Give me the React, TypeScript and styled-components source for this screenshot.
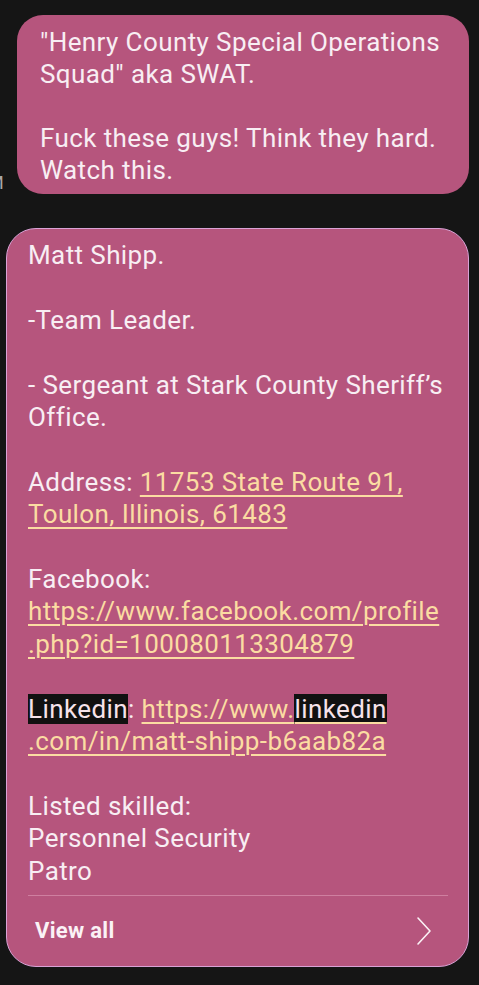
import * as React from "react";
import styled, { createGlobalStyle } from "styled-components";

const GlobalStyle = createGlobalStyle`
  html, body {
    margin: 0;
    padding: 0;
    background: #151515;
  }
  body {
    font-family: Roboto, "Noto Sans", "Liberation Sans", sans-serif;
  }
`;

const Page = styled.div`
  width: 479px;
  min-height: 985px;
  background: #151515;
  padding-top: 15px;
  box-sizing: border-box;
  overflow: hidden;
`;

const Row = styled.div`
  display: flex;
  align-items: flex-end;
`;

// timestamp, mostly scrolled off the left edge
const Time = styled.span`
  width: 17px;
  flex: none;
  font-size: 18px;
  line-height: 18px;
  color: #a8a8a8;
  padding-bottom: 2px;
  text-indent: -12px;
  overflow: hidden;
`;

const Bubble = styled.div<{ $bordered?: boolean }>`
  background: #b6557d;
  color: #f8eef3;
  font-size: 26px;
  letter-spacing: 0.4px;
  line-height: 32.4px;
  white-space: nowrap;
  box-sizing: border-box;
  border-radius: ${p => (p.$bordered ? "30px" : "26px")};
  border: ${p => (p.$bordered ? "1.5px solid #d9a2d6" : "none")};
`;

const SentBubble = styled(Bubble)`
  width: 452px;
  padding: 11px 20px 8px 23px;
  line-height: 32px;
`;

const CardWrap = styled.div`
  padding: 34px 10px 0 6px;
`;

const Card = styled(Bubble)`
  padding: 10px 20px 0 21px;
`;

// one visual line of message text; $gap adds a blank line before it
const Line = styled.div<{ $gap?: boolean }>`
  margin-top: ${p => (p.$gap ? "1lh" : "0")};
`;

const Link = styled.span`
  color: #fbdca2;
  text-decoration: underline;
  text-decoration-thickness: 1.5px;
  text-underline-offset: 4px;
`;

const Mark = styled.span`
  background: #111;
  color: #f6e3ea;
`;

const Divider = styled.div`
  height: 1px;
  background: rgba(255, 205, 225, 0.35);
  margin-top: 8px;
`;

const Footer = styled.div`
  display: flex;
  align-items: center;
  justify-content: space-between;
  height: 70px;
  padding: 0 15px 0 7px;
`;

const ViewAll = styled.span`
  font-size: 22px;
  font-weight: 700;
  color: #fbf2f6;
  letter-spacing: 0.3px;
`;

export default function App() {
  return (
    <>
      <GlobalStyle />
      <Page>
        <Row>
          <Time>M</Time>
          <SentBubble>
            <Line>"Henry County Special Operations</Line>
            <Line>Squad" aka SWAT.</Line>
            <Line $gap>Fuck these guys! Think they hard.</Line>
            <Line>Watch this.</Line>
          </SentBubble>
        </Row>
        <CardWrap>
          <Card $bordered>
            <Line>Matt Shipp.</Line>
            <Line $gap>-Team Leader.</Line>
            <Line $gap>- Sergeant at Stark County Sheriff’s</Line>
            <Line>Office.</Line>
            <Line $gap>
              Address: <Link>11753 State Route 91,</Link>
            </Line>
            <Line>
              <Link>Toulon, Illinois, 61483</Link>
            </Line>
            <Line $gap>Facebook:</Line>
            <Line>
              <Link>https://www.facebook.com/profile</Link>
            </Line>
            <Line>
              <Link>.php?id=100080113304879</Link>
            </Line>
            <Line $gap>
              <Mark>Linkedin</Mark>:{" "}
              <Link>
                https://www.<Mark>linkedin</Mark>
              </Link>
            </Line>
            <Line>
              <Link>.com/in/matt-shipp-b6aab82a</Link>
            </Line>
            <Line $gap>Listed skilled:</Line>
            <Line>Personnel Security</Line>
            <Line>Patro</Line>
            <Divider />
            <Footer>
              <ViewAll>View all</ViewAll>
              <svg width="18" height="30" viewBox="0 0 18 30" fill="none">
                <path
                  d="M3 2 L15 15 L3 28"
                  stroke="#fbf2f6"
                  strokeWidth="1.6"
                  strokeLinecap="round"
                  strokeLinejoin="round"
                />
              </svg>
            </Footer>
          </Card>
        </CardWrap>
      </Page>
    </>
  );
}
